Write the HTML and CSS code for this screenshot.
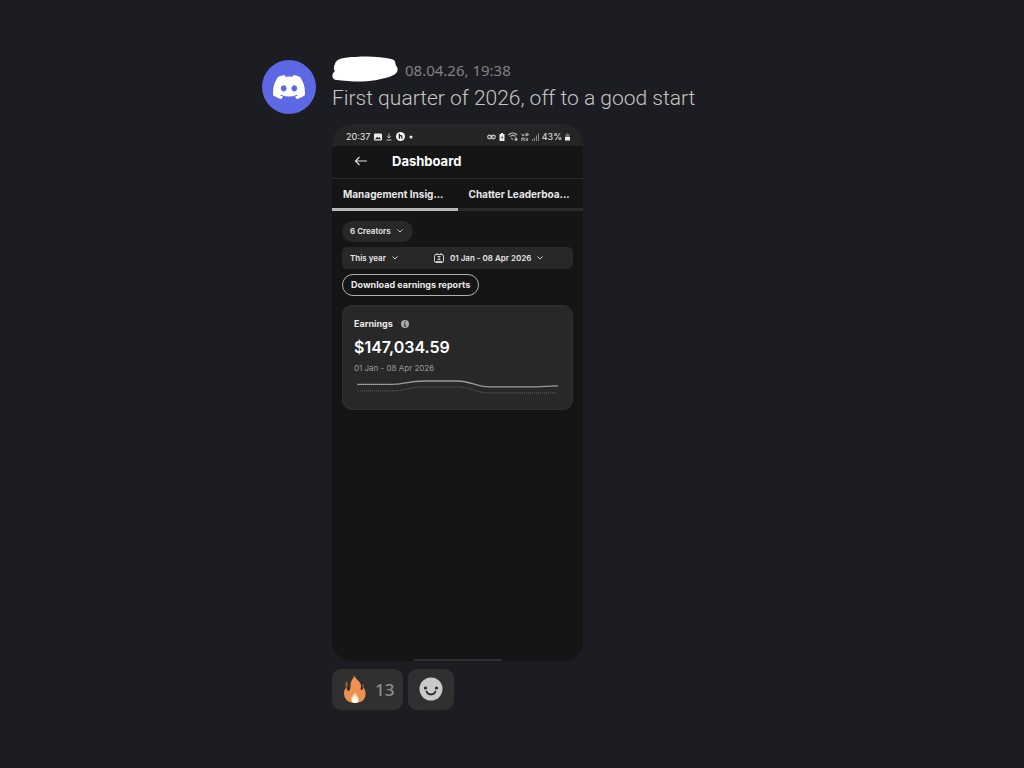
FILE: index.html
```
<!DOCTYPE html>
<html lang="en">
  <head>
    <meta charset="UTF-8" />
    <meta name="viewport" content="width=device-width, initial-scale=1.0" />
    <title>Message</title>
    <link rel="stylesheet" href="styles.css" />
  </head>
  <body>
    <article class="message">
      <div class="avatar">
        <svg viewBox="0 0 127.14 96.36" aria-hidden="true">
          <path fill="#fff" d="M107.7,8.07A105.15,105.15,0,0,0,81.47,0a72.06,72.06,0,0,0-3.36,6.83A97.68,97.68,0,0,0,49,6.83,72.37,72.37,0,0,0,45.64,0,105.89,105.89,0,0,0,19.39,8.09C2.79,32.65-1.71,56.6.54,80.21h0A105.73,105.73,0,0,0,32.71,96.36,77.7,77.7,0,0,0,39.6,85.25a68.42,68.42,0,0,1-10.85-5.18c.91-.66,1.8-1.34,2.66-2a75.57,75.57,0,0,0,64.32,0c.87.71,1.76,1.39,2.66,2a68.68,68.68,0,0,1-10.87,5.19,77,77,0,0,0,6.89,11.1A105.25,105.25,0,0,0,126.6,80.22h0C129.24,52.84,122.09,29.11,107.7,8.07ZM42.45,65.69C36.18,65.69,31,60,31,53s5-12.74,11.43-12.74S54,46,53.89,53,48.84,65.69,42.45,65.69Zm42.24,0C78.41,65.69,73.25,60,73.25,53s5-12.74,11.44-12.74S96.23,46,96.12,53,91.08,65.69,84.69,65.69Z" />
        </svg>
      </div>

      <div class="body">
        <header class="meta">
          <svg class="author" viewBox="0 0 68 27" aria-hidden="true">
            <path fill="#fff" d="M3 8C4 3 12 1 24 1C38 0 51 1 60 3C65 4 64 7 65 10C68 13 67 18 61 20C51 24 38 26 26 26C16 25 8 25 3 24C-1 22 0 18 3 15C1 13 2 10 3 8Z" />
          </svg>
          <time class="time" datetime="2026-04-08T19:38">08.04.26, 19:38</time>
        </header>
        <p class="text">First quarter of 2026, off to a good start</p>

        <section class="phone">
          <div class="statusbar">
            <div class="status-group">
              <span>20:37</span>
              <svg width="8" height="8" viewBox="0 0 8 8"><rect y="0.5" width="8" height="7" rx="1" fill="#eee" /><path d="M1 6.2L3 3.8L4.3 5L5.4 4L7 6.2Z" fill="#222" /></svg>
              <svg width="6" height="8" viewBox="0 0 7 8" fill="none" stroke="#ddd"><path d="M3.5 0V5M1.5 3.2L3.5 5.2L5.5 3.2M0.5 7.5H6.5" /></svg>
              <svg width="9" height="9" viewBox="0 0 10 10"><circle cx="5" cy="5" r="5" fill="#f4f4f4" /><path d="M3.8 2V7.5M3.8 4.5C4.8 3.5 6.5 4 6.5 5.2V7.5" fill="none" stroke="#222" stroke-width="1.4" /></svg>
              <svg width="4" height="4" viewBox="0 0 4 4"><circle cx="2" cy="2" r="1.5" fill="#eee" /></svg>
            </div>
            <div class="status-group status-right">
              <svg width="9" height="6" viewBox="0 0 9 6" fill="none" stroke="#ccc" stroke-width="1.1"><circle cx="2.6" cy="3" r="1.9" /><circle cx="6.4" cy="3" r="1.9" /><path d="M2.5 3H6.5" /></svg>
              <svg width="6" height="8" viewBox="0 0 6 8"><path d="M2 0H4V1H5.5V8H0.5V1H2Z" fill="#eee" /><path d="M3.6 2.5L2 4.8H3.2L2.6 6.6L4.3 4.2H3.2Z" fill="#222" /></svg>
              <svg width="10" height="9" viewBox="0 0 10 9" fill="none" stroke="#bbb" stroke-width="1.2"><path d="M0.5 3C3 0.5 6.5 0.5 9 3M2 4.6C3.8 2.9 5.8 2.9 7.2 4.4M3.3 6.1L4.8 7.6M8 5V8.5M6.7 7L8 8.5L9.3 7" /></svg>
              <svg width="8" height="8" viewBox="0 0 8 8" fill="none" stroke="#bbb"><path d="M0.5 0.8L2 3L3.5 0.8M5 3.5V0.8H7.2V2.2H5M0.8 8V5H3V8M4.5 5L7 8M7 5L4.5 8" /></svg>
              <svg width="7" height="8" viewBox="0 0 7 8" fill="#888"><path d="M0 6H1V8H0ZM2 4.5H3V8H2ZM4 2.5H5V8H4ZM6 0.5H7V8H6Z" /></svg>
              <span>43%</span>
              <svg width="5" height="8" viewBox="0 0 5 8"><path d="M1.5 0.5H3.5V1.5H4.5V4H0.5V1.5H1.5Z" fill="#777" /><path d="M0 4H5V7.5H0Z" fill="#eee" /></svg>
            </div>
          </div>

          <div class="titlebar">
            <button class="back" type="button" aria-label="Back">
              <svg width="14" height="10" viewBox="0 0 14 10" fill="none" stroke="#ddd" stroke-width="1.2"><path d="M13 5H1.5M5.5 1L1.5 5L5.5 9" /></svg>
            </button>
            <h1 class="title">Dashboard</h1>
          </div>

          <nav class="tabs">
            <a class="tab active" href="#insights">Management Insig...</a>
            <a class="tab" href="#leaderboard">Chatter Leaderboa...</a>
          </nav>

          <div class="content" id="insights">
            <div class="field creators">
              <select class="select" aria-label="Creators">
                <option>6 Creators</option>
              </select>
              <svg class="chevron" viewBox="0 0 6 4"><path d="M0.5 0.5L3 3L5.5 0.5" /></svg>
            </div>

            <div class="period">
              <div class="field">
                <select class="select" aria-label="Period">
                  <option>This year</option>
                </select>
                <svg class="chevron" viewBox="0 0 6 4"><path d="M0.5 0.5L3 3L5.5 0.5" /></svg>
              </div>
              <button class="dates" type="button">
                <svg width="10" height="10" viewBox="0 0 10 10" fill="none" stroke="#ccc"><rect x="0.5" y="1.5" width="9" height="8" rx="1.5" /><path d="M3 0V2M7 0V2M2 8.5H8M3.5 3.5H6.5M5 3.5V6.5M3.5 6.5H6.5" /></svg>
                01 Jan - 08 Apr 2026
                <svg class="chevron" viewBox="0 0 6 4"><path d="M0.5 0.5L3 3L5.5 0.5" /></svg>
              </button>
            </div>

            <button class="download" type="button">Download earnings reports</button>

            <div class="card">
              <h2 class="card-title">
                Earnings
                <svg width="8" height="8" viewBox="0 0 8 8"><circle cx="4" cy="4" r="4" fill="#aaa" /><path d="M4 1.3V2.5M3 3.7H4V6.2M3 6.2H5" stroke="#333" fill="none" /></svg>
              </h2>
              <div class="amount">$147,034.59</div>
              <div class="range">01 Jan - 08 Apr 2026</div>
              <svg class="chart" viewBox="0 0 208 20" fill="none" aria-hidden="true">
                <path d="M3 6.5H38C50 6.5 52 3 72 3H104C118 3 122 9 136 9H176C190 9 194 8 205 8" stroke="#999" stroke-width="1.3" />
                <path d="M4 13H38C52 13 54 9 72 9H104C118 9 122 15 136 15H204" stroke="#666" stroke-dasharray="1 1" />
              </svg>
            </div>
          </div>
          <div class="home"></div>
        </section>

        <footer class="reactions">
          <button class="reaction" type="button">
            <svg width="24" height="28" viewBox="0 0 24 28" aria-hidden="true">
              <path fill="#ed9150" d="M11 0C12 4 18 6 18 11C18 13 17 14 18 15C20 15 20 13 20 12C22 14 23 17 22.5 20C22 25 18 28 12 28C5 28 1 24 1 18C1 16 2 14 3 12C4 14 4 16 6 16C8 14 7 11 8 7C9 4 11 3 11 0Z" />
              <path fill="#b65a35" d="M3.5 6C5 8 5 11 4 13C2 11 2 9 3.5 6ZM20 9C21 10 21 12 20 13C19 11 19 10 20 9Z" />
              <path fill="#f8c99c" d="M12 17C13 20 16 21 16 24C16 27 14 28 12 28C9 28 8 26 8 24C8 21 11 20 12 17Z" />
              <path fill="#fff" d="M12 20C13 22 15 23 15 25C15 27 14 28 12 28C10 28 9 27 9 25C9 23 11 22 12 20Z" />
            </svg>
            <span>13</span>
          </button>
          <button class="reaction add" type="button" aria-label="Add reaction">
            <svg width="24" height="24" viewBox="0 0 24 24">
              <circle cx="12" cy="12" r="11.5" fill="#c9c9c9" />
              <circle cx="6.5" cy="11" r="1.6" fill="#292929" />
              <circle cx="17.5" cy="11" r="1.6" fill="#292929" />
              <path d="M7.5 14.5C9 18.5 15 18.5 16.5 14.5" fill="none" stroke="#292929" stroke-width="1.8" stroke-linecap="round" />
            </svg>
          </button>
        </footer>
      </div>
    </article>
  </body>
</html>
```
FILE: styles.css
```
* {
  margin: 0;
  padding: 0;
  box-sizing: border-box;
}

body {
  font-family: "Noto Sans", sans-serif;
  background: #1c1d22;
  color: #c6c6c3;
  padding: 56px 16px;
}

button,
select {
  font: inherit;
  color: inherit;
  background: none;
  border: none;
  cursor: pointer;
}

svg {
  display: block;
  flex-shrink: 0;
}

.message {
  display: flex;
  gap: 16px;
  max-width: 500px;
  margin: 0 auto;
}

.avatar {
  display: flex;
  align-items: center;
  justify-content: center;
  flex-shrink: 0;
  width: 54px;
  height: 54px;
  margin-top: 4px;
  border-radius: 50%;
  background: #5d68e4;
}

.avatar svg {
  width: 32px;
}

.body {
  flex: 1;
}

.meta {
  display: flex;
  align-items: center;
  gap: 6px;
}

.author {
  width: 67px;
}

.time {
  font-size: 15px;
  line-height: 20px;
  padding-top: 2px;
  color: #828284;
}

.text {
  font-family: Roboto, sans-serif;
  font-size: 21px;
  font-weight: 300;
  line-height: 30px;
  margin-bottom: 11px;
}

/* Attached phone screenshot */
.phone {
  display: flex;
  flex-direction: column;
  max-width: 251px;
  aspect-ratio: 251 / 537;
  border-radius: 20px;
  overflow: hidden;
  background: #151515;
  color: #e8e8e8;
  font-family: Inter, sans-serif;
  font-size: 9px;
}

.statusbar {
  display: flex;
  justify-content: space-between;
  align-items: center;
  padding: 6px 13px 2px 14px;
  line-height: 14px;
  background: #252525;
}

.status-group {
  display: flex;
  align-items: center;
  gap: 4px;
}

.status-right {
  gap: 3px;
}

.titlebar {
  display: flex;
  align-items: center;
  gap: 24px;
  height: 33px;
  padding: 0 22px 2px;
  border-bottom: 1px solid #2c2c2c;
}

.title {
  font-size: 13px;
  font-weight: 700;
  color: #fff;
}

.tabs {
  display: grid;
  grid-template-columns: 1fr 1fr;
}

.tab {
  padding: 8px 0 6px 11px;
  border-bottom: 3px solid #2a2a2a;
  font-size: 10px;
  font-weight: 700;
  line-height: 15px;
  white-space: nowrap;
  color: inherit;
  text-decoration: none;
}

.tab.active {
  border-color: #b4b9b6;
}

.content {
  display: flex;
  flex-direction: column;
  align-items: flex-start;
  gap: 5px;
  padding: 10px;
}

.field {
  display: flex;
  align-items: center;
  gap: 6px;
}

.select {
  appearance: none;
  font-size: 8px;
  font-weight: 600;
  line-height: 12px;
}

.chevron {
  width: 6px;
  fill: none;
  stroke: #ccc;
}

.creators {
  height: 21px;
  padding: 0 10px 0 8px;
  border-radius: 12px;
  background: #282828;
}

.period {
  display: flex;
  gap: 36px;
  width: 100%;
  height: 22px;
  padding: 0 8px;
  border-radius: 5px;
  background: #282828;
}

.dates {
  display: flex;
  align-items: center;
  gap: 6px;
  font-size: 8px;
  font-weight: 600;
}

.download {
  height: 22px;
  padding: 0 8px;
  border: 1px solid #b0b0b0;
  border-radius: 11px;
  font-weight: 700;
}

.card {
  width: 100%;
  margin-top: 4px;
  padding: 12px 11px;
  border: 1px solid #303030;
  border-radius: 10px;
  background: #282828;
}

.card-title {
  display: flex;
  align-items: center;
  gap: 8px;
  font-size: 9px;
  font-weight: 700;
  line-height: 12px;
}

.amount {
  margin: 6px 0 4px;
  font-size: 16px;
  font-weight: 600;
  line-height: 22px;
  color: #fff;
}

.range {
  font-size: 8px;
  line-height: 12px;
  color: #999;
}

.chart {
  width: 100%;
  margin-top: 4px;
}

.home {
  width: 88px;
  height: 2px;
  margin: auto auto 0;
  background: #303030;
}

.reactions {
  display: flex;
  gap: 5px;
  margin-top: 8px;
}

.reaction {
  display: flex;
  align-items: center;
  gap: 8px;
  height: 41px;
  padding: 0 9px 0 11px;
  border-radius: 9px;
  background: #303030;
  color: #8e8e90;
  font-size: 17px;
  font-weight: 500;
}

.add {
  padding: 0 11px;
}
```
